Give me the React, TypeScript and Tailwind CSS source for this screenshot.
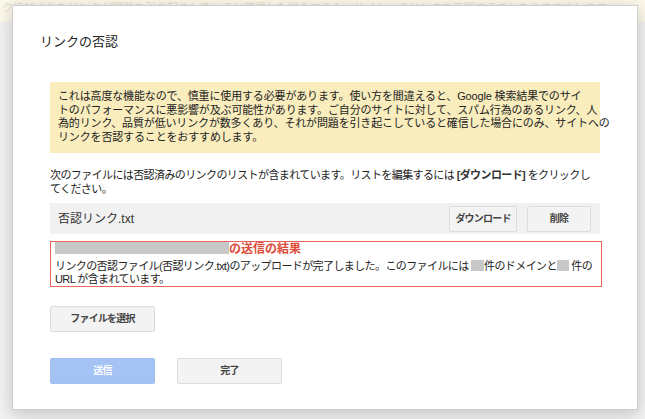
import React from "react";

const font = "font-['Liberation_Sans','Noto_Sans_CJK_JP',sans-serif]";

const GrayBlock = ({ w }: { w: string }) => (
  <span className={`inline-block ${w} h-[11px] align-[-1px] bg-[#c8c8c8]`} />
);

const Btn = ({ children, w }: { children: React.ReactNode; w: string }) => (
  <button
    className={`${w} h-[26px] rounded-[2px] border border-[#dcdcdc] bg-[#f3f3f3] text-[10px] tracking-[-0.8px] font-bold text-[#444]`}
  >
    {children}
  </button>
);

export default function App() {
  return (
    <div className={`relative w-[645px] h-[419px] overflow-hidden bg-[#f2f2f2] ${font}`}>
      {/* faded page behind the dialog */}
      <div className="absolute inset-x-0 top-0 h-[22px] bg-[#fbf8ea] pl-[2px] pt-[1px] text-[11px] leading-[14px] whitespace-nowrap text-[#e2dece]">
        ク追加されたリンクが問題を引き起こしていると確信した場合にのみ、サイトへのリンクを否認することをおすすめします。
      </div>

      <div className="relative ml-[12px] mt-[5px] w-[626px] h-[405px] border border-[#cfcfcf] bg-white shadow-[0_4px_16px_rgba(0,0,0,0.2)] text-[#222]">
        <div className="pl-[27px] pt-[28px] text-[13px] leading-[16px] text-[#222]">リンクの否認</div>

        <div className="ml-[37px] mt-[32px] w-[550px]">
          <div className="h-[71px] bg-[#f9edbe] pl-[8px] pt-[8px] text-[11px] leading-[13.5px] tracking-[-0.15px] whitespace-nowrap">
            これは高度な機能なので、慎重に使用する必要があります。使い方を間違えると、Google 検索結果でのサイ
            <br />
            トのパフォーマンスに悪影響が及ぶ可能性があります。ご自分のサイトに対して、スパム行為のあるリンク、人
            <br />
            為的リンク、品質が低いリンクが数多くあり、それが問題を引き起こしていると確信した場合にのみ、サイトへの
            <br />
            リンクを否認することをおすすめします。
          </div>

          <div className="mt-[15px] text-[11px] leading-[14px] tracking-[-0.6px] whitespace-nowrap">
            次のファイルには否認済みのリンクのリストが含まれています。リストを編集するには{" "}
            <b className="text-[#333]">[ダウンロード]</b> をクリックし
            <br />
            てください。
          </div>

          <div className="mt-[7px] flex h-[31px] items-center justify-between bg-[#f1f1f1] pl-[8px] pr-[9px]">
            <span className="text-[12px] text-[#333]">否認リンク.txt</span>
            <div className="flex gap-[10px]">
              <Btn w="w-[68px]">ダウンロード</Btn>
              <Btn w="w-[64px]">削除</Btn>
            </div>
          </div>

          <div className="mt-[7px] h-[46px] w-[552px] border border-[#e8675a] pl-[4px] text-[11px]">
            <div className="flex h-[14px] items-center leading-[14px]">
              <span className="inline-block h-[12px] w-[174px] self-start bg-[#c8c8c8]" />
              <span className="font-bold text-[#dd4b39] text-[12px]">の送信の結果</span>
            </div>
            <div className="mt-[4px] leading-[13px] tracking-[-0.6px] whitespace-nowrap">
              リンクの否認ファイル(否認リンク.txt)のアップロードが完了しました。このファイルには <GrayBlock w="w-[13px]" />
              件のドメインと
              <GrayBlock w="w-[12px]" /> 件の
              <br />
              URL が含まれています。
            </div>
          </div>

          <div className="mt-[18px]">
            <Btn w="w-[105px]">ファイルを選択</Btn>
          </div>

          <div className="mt-[26px] flex gap-[22px]">
            <button className="h-[26px] w-[105px] rounded-[2px] border border-[#a0bff2] bg-[#a4c2f4] text-[10px] tracking-[-0.8px] font-bold text-white">
              送信
            </button>
            <Btn w="w-[105px]">完了</Btn>
          </div>
        </div>
      </div>
    </div>
  );
}
